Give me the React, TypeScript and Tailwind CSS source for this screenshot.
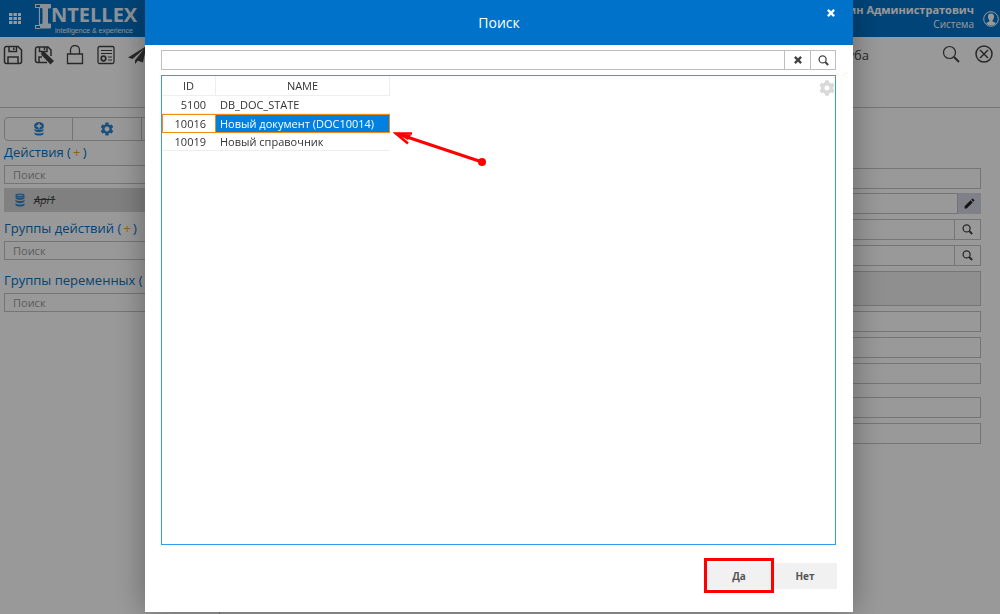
import React, { useState } from 'react'
import { MdSettings, MdEdit } from 'react-icons/md'
import { FaCog } from 'react-icons/fa'

interface RecordRow {
  id: number
  name: string
}

const records: RecordRow[] = [
  { id: 5100, name: 'DB_DOC_STATE' },
  { id: 10016, name: 'Новый документ (DOC10014)' },
  { id: 10019, name: 'Новый справочник' },
]

const CloseIcon: React.FC<{ className?: string }> = ({ className }) => (
  <svg className={className} viewBox="0 0 9 9" fill="none" stroke="currentColor" strokeWidth="2.6">
    <path d="M1 1l7 7M8 1L1 8" />
  </svg>
)

const SearchIcon: React.FC<{ className?: string }> = ({ className }) => (
  <svg className={className} viewBox="0 0 11 11" fill="none" stroke="currentColor">
    <circle cx="4.6" cy="4.4" r="3.5" strokeWidth="1.3" />
    <path d="M7.2 7l3 3" strokeWidth="1.9" />
  </svg>
)

const DatabaseIcon: React.FC<{ plus?: boolean }> = ({ plus }) => (
  <svg className="h-[14px] w-3" viewBox="0 0 12 14" fill="#2a86d0">
    <path d="M1.500 10.200c1 1 2.700 1.300 4.500 1.300s3.500-.3 4.500-1.300v1.500c0 1.100-2 1.900-4.500 1.900s-4.500-.8-4.500-1.900z" />
    <path d="M1.500 6.800c1 1 2.700 1.300 4.500 1.300s3.500-.3 4.500-1.300v1.500c0 1.100-2 1.900-4.500 1.900s-4.500-.8-4.500-1.900z" />
    {plus ? (
      <>
        <ellipse cx="6" cy="3.900" rx="4.900" ry="3.900" />
        <path d="M6 1.500v5M3.500 4h5" stroke="white" strokeWidth="1.400" />
      </>
    ) : (
      <>
        <path d="M1.500 3.400c1 1 2.700 1.300 4.500 1.300s3.500-.3 4.500-1.300v1.500c0 1.100-2 1.900-4.500 1.900s-4.500-.8-4.500-1.900z" />
        <ellipse cx="6" cy="2.400" rx="4.600" ry="2" />
        <ellipse cx="6" cy="2.400" rx="3.200" ry=".9" fill="#8cc2ec" />
      </>
    )}
  </svg>
)

const toolbarButtons = [
  {
    label: 'Сохранить',
    icon: (
      <>
        <path d="M3.500 1.500H15L18.500 5v11.500a2 2 0 0 1-2 2h-13a2 2 0 0 1-2-2v-13a2 2 0 0 1 2-2z" />
        <path d="M6 1.500v5h7.500v-5M10.800 2.500v2.500M5 18.500v-6.500h10v6.500" />
      </>
    ),
  },
  {
    label: 'Сохранить и изменить',
    icon: (
      <>
        <path d="M17 11V5L14 2H3.500a2 2 0 0 0-2 2v11.500a2 2 0 0 0 2 2H13M5.500 2v4.500H13V2M10.500 2.500v2.500M5 17.500v-5.500h3" />
        <path d="M8 7l2 .5 9 8.500-2.500 2.500L8 9.500z" fill="currentColor" />
      </>
    ),
  },
  {
    label: 'Заблокировать',
    icon: <path d="M2.500 9h15v9.500h-15zM5.500 9V5a4.500 4.500 0 0 1 9 0v4" strokeWidth="1.300" />,
  },
  {
    label: 'Журнал',
    icon: (
      <>
        <rect x="2" y="1.500" width="16" height="17" rx="1.500" strokeWidth="1.300" />
        <path d="M5 5.500h11M5 8.500h11M12 12h4M12 15h4" strokeWidth="1" />
        <circle cx="7.500" cy="13.500" r="2.300" strokeWidth="1.700" />
      </>
    ),
  },
  {
    label: 'Отправить',
    icon: <path d="M19.500 1L1 12.500l4.500 1.500L17 4 8 15.200V19l2.800-3.200L16 17.500z" fill="currentColor" stroke="none" />,
  },
]

const Header = () => (
  <header className="flex h-[37px] shrink-0 items-center bg-[#0072c9] pl-[9px] pr-px text-white">
    <button aria-label="Меню" className="mr-[14px]">
      <svg className="h-[11px] w-3" viewBox="0 0 12 11" fill="white">
        {[0, 4, 8].map((y) =>
          [0, 4.5, 9].map((x) => <rect key={`${x}-${y}`} x={x} y={y} width="3.4" height="3" />)
        )}
      </svg>
    </button>
    <a href="#" className="flex h-8 items-start text-[#e8f2fa]">
      <svg className="h-7 w-4 shrink-0" viewBox="0 0 16 28" fill="none" stroke="currentColor">
        <path d="M5.500 1.500h10v3.500h-3v16h3v4h-10v-4h2.500v-16h-2.500z" fill="currentColor" strokeWidth="1" />
        <path d="M5.500 1.500h-5v3h4v18h-4v3h5" strokeWidth="1.200" />
        <path d="M6 5v16" stroke="#0072c9" strokeWidth="1.500" />
      </svg>
      <span className="flex flex-col">
        <span className="text-[20px] leading-6 font-bold">NTELLEX</span>
        <span className="pl-1 font-['Liberation_Sans',sans-serif] text-[7px] leading-2 whitespace-nowrap">
          intelligence &amp; experience
        </span>
      </span>
    </a>
    <div className="ml-auto mr-[9px] pb-1 text-right text-[11px] leading-[14px]">
      <div className="font-bold">Админ Администратович</div>
      <div className="text-[10px] leading-[14px]">Система</div>
    </div>
    <svg className="h-4 w-4" viewBox="0 0 16 16">
      <circle cx="8" cy="8" r="7.300" fill="none" stroke="white" strokeWidth="1" />
      <path d="M8 2.500c2.300 0 3.200 1.700 3 3.700-.2 1.500-.8 2.400-1.400 3v1.200l3.400 1.500A6.500 6.500 0 0 1 8 14.600a6.500 6.500 0 0 1-5-2.700l3.400-1.500V9.200C5.800 8.600 5.200 7.700 5 6.200c-.2-2 .7-3.700 3-3.700z" fill="white" />
    </svg>
  </header>
)

const Toolbar = () => (
  <div className="flex h-[71px] shrink-0 items-start border-b border-[#c4c4c4] pt-2 pl-[3px] pr-[6px] text-[#444]">
    <div className="flex gap-[11px]">
      {toolbarButtons.map((button) => (
        <button key={button.label} aria-label={button.label} className="h-5 w-5">
          <svg className="h-5 w-5" viewBox="0 0 20 20" fill="none" stroke="currentColor" strokeWidth="1.500">
            {button.icon}
          </svg>
        </button>
      ))}
    </div>
    <h1 className="ml-auto mr-[72px] text-[13px] leading-5">Труба</h1>
    <button aria-label="Найти" className="mr-[14px]">
      <svg className="h-5 w-5" viewBox="0 0 20 20" fill="none" stroke="currentColor">
        <circle cx="8.500" cy="7.500" r="6" strokeWidth="1.200" />
        <path d="M13 12l5 5" strokeWidth="2" />
      </svg>
    </button>
    <button aria-label="Закрыть" className="mr-px">
      <svg className="h-[18px] w-[18px]" viewBox="0 0 18 18" fill="none" stroke="currentColor" strokeWidth="1.500">
        <circle cx="9" cy="9" r="8" />
        <path d="M5 5l8 8M13 5l-8 8" />
      </svg>
    </button>
  </div>
)

interface SectionProps {
  title: string
  children?: React.ReactNode
}

const Section: React.FC<SectionProps> = ({ title, children }) => (
  <section>
    <h2 className="h-6 text-[13px] leading-[22px] whitespace-nowrap text-[#0072c9]">
      {title} (&thinsp;<button className="text-[#f5a623]" aria-label={`Добавить: ${title}`}>+</button>&thinsp;)
    </h2>
    <input
      aria-label={title}
      placeholder="Поиск"
      className="block h-[19px] w-full border border-[#c4c4c4] bg-white px-2 text-[11px] placeholder:text-[#999]"
    />
    {children}
  </section>
)

const Sidebar = () => (
  <aside className="w-[220px] shrink-0 border-r border-[#c4c4c4] px-1 pt-[9px]">
    <div className="flex h-6 divide-x divide-[#c4c4c4] rounded-sm border border-[#c4c4c4]">
      <button aria-label="Данные" className="flex w-[68px] items-center justify-center">
        <DatabaseIcon plus />
      </button>
      <button aria-label="Настройки" className="flex w-[69px] items-center justify-center text-[#2a86d0]">
        <MdSettings size={16} />
      </button>
      <button aria-label="Прочее" className="flex-1" />
    </div>
    <Section title="Действия">
      <a href="#" className="mt-1 mb-[5px] flex h-6 items-center gap-2 bg-[#d5d5d5] pl-[10px] text-[11px] text-[#444] italic line-through">
        <DatabaseIcon />
        Api1
      </a>
    </Section>
    <div className="flex flex-col gap-[9px]">
      <Section title="Группы действий" />
      <Section title="Группы переменных" />
    </div>
  </aside>
)

const fieldClass = 'block h-[21px] w-full border border-[#c4c4c4] bg-white px-2 text-[11px]'

const DetailsForm = () => (
  <form className="flex flex-1 flex-col gap-[5px] pt-[60px] pr-[19px] pl-40">
    <div className="flex flex-col gap-1">
      <input aria-label="Код" className={fieldClass} />
      <div className="flex">
        <input aria-label="Наименование" className={fieldClass} />
        <button type="button" aria-label="Изменить" className="flex w-[23px] shrink-0 items-center justify-center bg-[#d5d7e3] text-[#222]">
          <MdEdit size={13} />
        </button>
      </div>
    </div>
    {['Документ', 'Справочник'].map((label) => (
      <div key={label} className="flex">
        <input aria-label={label} className={fieldClass} />
        <button type="button" aria-label={`Найти: ${label}`} className="flex w-[26px] shrink-0 items-center justify-center border border-l-0 border-[#c4c4c4] text-[#444]">
          <SearchIcon className="h-[11px] w-[11px]" />
        </button>
      </div>
    ))}
    <textarea aria-label="Описание" disabled className="block h-[35px] w-full resize-none border border-[#c4c4c4] bg-[#eee]" />
    <input aria-label="Метод" className={fieldClass} />
    <input aria-label="Адрес" className={fieldClass} />
    <input aria-label="Порт" className={fieldClass} />
    <div className="mt-2 flex flex-col gap-[5px]">
      <input aria-label="Логин" className={fieldClass} />
      <input aria-label="Группа" className={fieldClass} />
    </div>
  </form>
)

interface RecordsTableProps {
  selectedId: number
  onSelect: (id: number) => void
}

const RecordsTable: React.FC<RecordsTableProps> = ({ selectedId, onSelect }) => (
  <div className="relative">
    <table className="w-[228px] table-fixed border-separate border-spacing-0 text-[11px] leading-[17px] text-[#333]">
      <thead>
        <tr className="leading-[19px]">
          <th className="w-[54px] border-r border-b border-[#eee] font-normal">ID</th>
          <th className="border-r border-b border-[#eee] font-normal">NAME</th>
        </tr>
      </thead>
      <tbody>
        {records.map((record) => {
          const selected = record.id === selectedId
          return (
            <tr key={record.id} onClick={() => onSelect(record.id)}>
              <td
                className={
                  selected
                    ? 'border border-[#f08c10] pr-[9px] text-right'
                    : 'border-b border-[#eee] pr-[10px] text-right'
                }
              >
                {record.id}
              </td>
              <td
                className={
                  selected
                    ? 'border border-l-0 border-[#f08c10] bg-[#0080e0] pl-1 whitespace-nowrap text-white'
                    : 'border-b border-[#eee] pl-1 whitespace-nowrap'
                }
              >
                {record.name}
              </td>
            </tr>
          )
        })}
      </tbody>
    </table>
    {/* Pointer to the selected row */}
    <svg className="pointer-events-none absolute top-[54px] left-[231px] h-10 w-24" viewBox="0 0 96 40" stroke="red" fill="none">
      <path d="M5 4L89 32" strokeWidth="3" />
      <path d="M19 3.500L3 3.500L15 13.500" strokeWidth="2.500" />
      <path d="M1 2.500L18 5l-3 5z" fill="red" stroke="none" />
      <circle cx="89" cy="32" r="4" fill="red" stroke="none" />
    </svg>
  </div>
)

const SearchDialog = () => {
  const [query, setQuery] = useState('')
  const [selectedId, setSelectedId] = useState(10016)

  return (
    <div className="fixed inset-0 flex bg-black/40 pr-[147px] pb-0.5 pl-[145px]">
      <div role="dialog" aria-label="Поиск" className="flex flex-1 flex-col bg-white shadow-[0_0_30px_rgba(0,0,0,0.35)]">
        <div className="relative flex h-[45px] shrink-0 items-center justify-center bg-[#0072c9] text-white">
          <h2 className="text-[14px] leading-5">Поиск</h2>
          <button aria-label="Закрыть окно" className="absolute top-[9px] right-[18px]">
            <CloseIcon className="h-2 w-2" />
          </button>
        </div>

        <div className="flex flex-1 flex-col gap-[5px] pt-[5px] pr-[17px] pl-4">
          <div className="flex h-5 divide-x divide-[#bebebe] border border-[#bebebe] text-[#444]">
            <input
              aria-label="Строка поиска"
              value={query}
              onChange={(event) => setQuery(event.target.value)}
              className="min-w-0 flex-1 px-2 text-[11px] outline-none"
            />
            <button aria-label="Очистить" onClick={() => setQuery('')} className="flex w-[26px] items-center justify-center">
              <CloseIcon className="h-2 w-2" />
            </button>
            <button aria-label="Искать" className="flex w-6 items-center justify-center">
              <SearchIcon className="h-[11px] w-[11px]" />
            </button>
          </div>
          <div className="flex flex-1 items-start justify-between border border-[#2f9df4]">
            <RecordsTable selectedId={selectedId} onSelect={setSelectedId} />
            <button aria-label="Настройки таблицы" className="pt-1 text-[#d9d9d9]">
              <FaCog size={16} />
            </button>
          </div>
        </div>

        <div className="flex justify-end gap-0.5 px-4 pt-[18px] pb-[23px] text-[10px] font-bold text-[#555]">
          <div className="relative">
            <button className="h-[26px] w-16 bg-[#f1f1f1]">Да</button>
            <span className="pointer-events-none absolute -inset-x-[3px] -top-[5px] -bottom-1 border-3 border-[#ff0000]" />
          </div>
          <button className="h-[26px] w-16 bg-[#f1f1f1]">Нет</button>
        </div>
      </div>
    </div>
  )
}

export default function App() {
  return (
    <div className="flex min-h-screen flex-col bg-white font-['Open_Sans','Noto_Sans',sans-serif] text-[#333]">
      <Header />
      <Toolbar />
      <main className="flex flex-1">
        <Sidebar />
        <DetailsForm />
      </main>
      <SearchDialog />
    </div>
  )
}
